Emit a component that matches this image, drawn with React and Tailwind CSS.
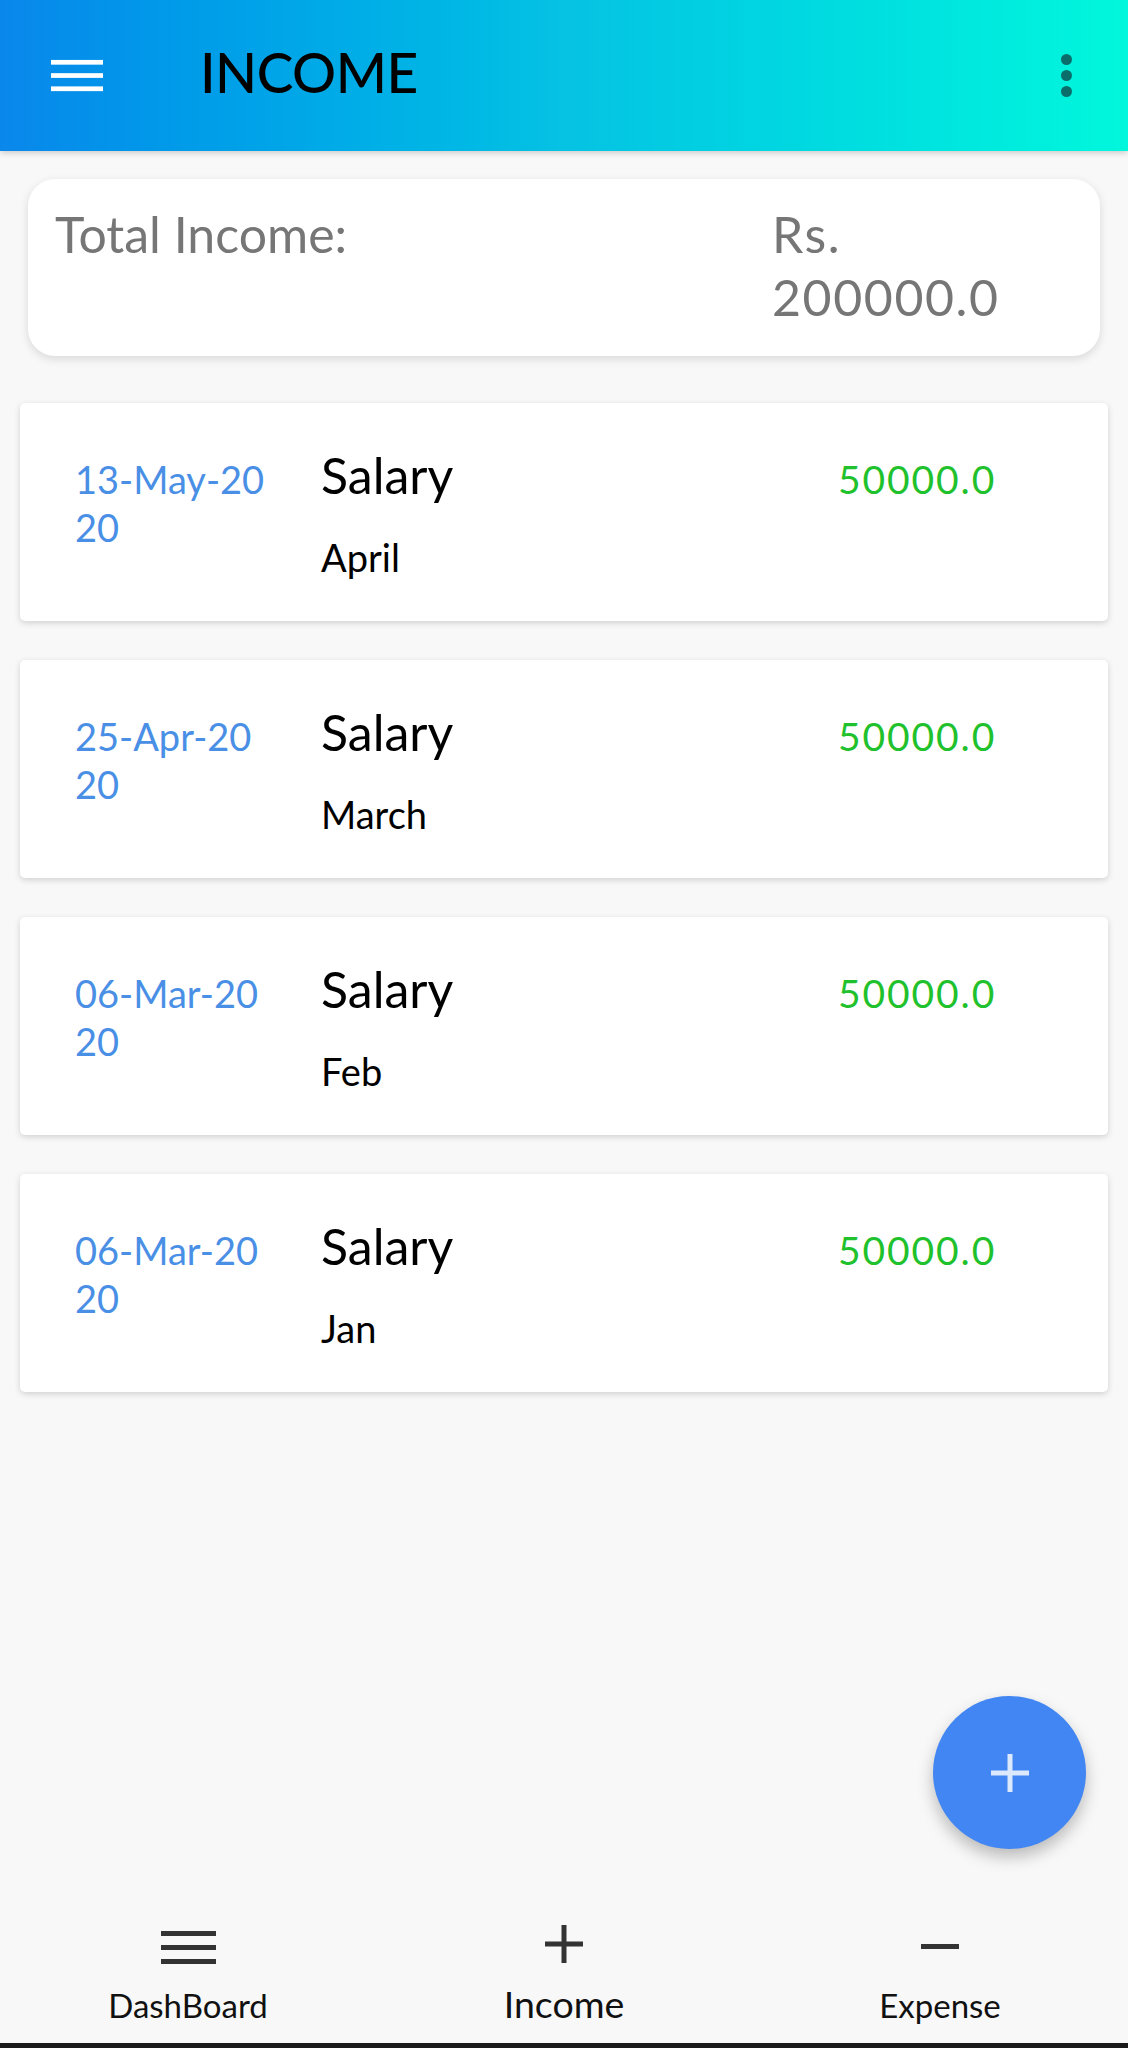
import React from 'react';

const entries = [
  { date: '13-May-2020', title: 'Salary', note: 'April', amount: '50000.0' },
  { date: '25-Apr-2020', title: 'Salary', note: 'March', amount: '50000.0' },
  { date: '06-Mar-2020', title: 'Salary', note: 'Feb', amount: '50000.0' },
  { date: '06-Mar-2020', title: 'Salary', note: 'Jan', amount: '50000.0' },
];

const MenuIcon = ({ className, color }) => (
  <svg className={className} viewBox="0 0 55 34" fill={color}>
    <rect x="0" y="0" width="55" height="5" />
    <rect x="0" y="14" width="55" height="5" />
    <rect x="0" y="28" width="55" height="5" />
  </svg>
);

const IncomeCard = ({ item }) => (
  <div className="flex h-[218px] items-start rounded-[5px] bg-white shadow-[0_2px_6px_rgba(0,0,0,0.16)]">
    <div className="ml-[55px] mt-[52px] w-[246px] text-[38px] leading-[48px] text-[#4a8fe6]">
      <span className="block">{item.date.slice(0, 9)}</span>
      <span className="block">{item.date.slice(9)}</span>
    </div>
    <div className="mt-[47px] flex-1">
      <p className="text-[50px] leading-none text-black">{item.title}</p>
      <p className="mt-[38px] text-[38px] leading-none text-black">{item.note}</p>
    </div>
    <div className="mt-[57px] w-[270px] text-[39px] leading-none tracking-[1.9px] text-[#1fc12c]">{item.amount}</div>
  </div>
);

const NavItem = ({ label, active, children }) => (
  <div className="flex flex-col items-center pt-[35px]">
    <div className="flex h-[40px] items-start justify-center">{children}</div>
    <div className="flex h-[57px] items-end">
      <span className={`leading-none text-[#111] ${active ? 'text-[37.5px]' : 'text-[33px]'}`}>{label}</span>
    </div>
  </div>
);

export default function App() {
  return (
    <div className="relative flex min-h-[2048px] w-[1128px] flex-col bg-[#f8f8f8] font-['Lato',sans-serif]">
      <header className="relative z-10 flex h-[151px] items-center bg-linear-to-r from-[#0a87eb] via-[#06c2e3] to-[#02f7dc] shadow-[0_2px_6px_rgba(0,0,0,0.18)]">
        <MenuIcon className="ml-[51px] h-[34px] w-[52px]" color="#fff" />
        <h1 className="mb-[6px] ml-[97px] text-[55px] font-medium leading-none tracking-[-0.5px] text-black">INCOME</h1>
        <div className="ml-auto mr-[56px] flex flex-col items-center gap-[5px]">
          <span className="h-[11px] w-[11px] rounded-full bg-[#0c6e6b]" />
          <span className="h-[11px] w-[11px] rounded-full bg-[#0c6e6b]" />
          <span className="h-[11px] w-[11px] rounded-full bg-[#0c6e6b]" />
        </div>
      </header>

      <main className="flex-1">
        <section className="mx-[28px] mt-[28px] flex rounded-[27px] bg-white px-[27px] pb-[27px] pt-[24px] text-[50px] leading-[63px] text-[#767676] shadow-[0_3px_10px_rgba(0,0,0,0.13)]">
          <p className="flex-1">Total Income:</p>
          <p className="mr-[45px] w-[256px] tracking-[1.6px]">Rs. 200000.0</p>
        </section>

        <div className="mx-[20px] mt-[47px] flex flex-col gap-[39px]">
          {entries.map((item, i) => (
            <IncomeCard key={i} item={item} />
          ))}
        </div>
      </main>

      <nav className="grid h-[153px] grid-cols-3">
        <NavItem label="DashBoard">
          <MenuIcon className="mt-[6px] h-[34px] w-[55px]" color="#333" />
        </NavItem>
        <NavItem label="Income" active>
          <svg className="h-[38px] w-[38px]" viewBox="0 0 38 38" fill="#333">
            <rect x="16.5" y="0" width="5" height="38" />
            <rect x="0" y="16.5" width="38" height="5" />
          </svg>
        </NavItem>
        <NavItem label="Expense">
          <svg className="mt-[19px] h-[5px] w-[38px]" viewBox="0 0 38 5" fill="#333">
            <rect x="0" y="0" width="38" height="5" />
          </svg>
        </NavItem>
      </nav>
      <div className="h-[5px] bg-[#1a1a1a]" />

      <button className="absolute bottom-[199px] right-[42px] flex h-[153px] w-[153px] items-center justify-center rounded-full bg-[#4186f2] shadow-[0_8px_16px_rgba(0,0,0,0.25)]">
        <svg className="h-[38px] w-[38px]" viewBox="0 0 38 38" fill="#dce8fc">
          <rect x="16.5" y="0" width="5" height="38" />
          <rect x="0" y="16.5" width="38" height="5" />
        </svg>
      </button>
    </div>
  );
}
